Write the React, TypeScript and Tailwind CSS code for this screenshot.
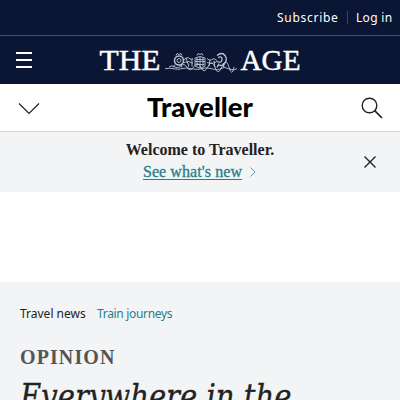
import React from "react";

const serif = "font-['Liberation_Serif',serif]";
const headline = "font-['DejaVu_Serif_Condensed','DejaVu_Serif',serif]";
const sans = "font-['Noto_Sans',sans-serif]";

function Crest() {
  return (
    <g fill="none" stroke="#dfe3ec" strokeWidth="0.9" opacity="0.85">
      <path d="M65 19.2q5-1 9 .1t8-.2 10 .2 10-.2 10 .2 9-.3 8 .3 8-.2M69 17.5q3-2.500 6 0t6-1 6 1.500 7-1 7 1 7-1 7 1 7-1 7 .6 5-.3" />
      <circle cx="79" cy="11" r="4.500" strokeWidth="1.500" />
      <circle cx="79" cy="11" r="2" />
      <path d="M76 6l1-2 2 1 2-1 1 2M75 15l-2 3M81 15l1 3M84 10l4-2 3 2 2-1M84 13l5-1 4 2M86 8l2 7M89 14l-1 4M92 9v8" />
      <path d="M95 8.500q5-3 10 0v8q-5 4-10 0zM95 12h10M100 7v12M97 6l1-2 2 1 2-1 1 2M96 10h8M96 15h8M97 8v9M103 8v9" />
      <path d="M107 9l3 2 4-2 3 2M107 13l5 1 5-2M110 10l-1 7M114 11l1 7" />
      <path d="M117 6q5-4 8 0t-1 9q-3 2-6 0M118 8q4-2 4 2t-5 2M119 14l-2 4M123 14l1 4" strokeWidth="1.300" />
    </g>
  );
}

function Masthead() {
  return (
    <svg width="202" height="40" viewBox="0 -8 202 40" className="block" role="img" aria-label="The Age">
      <g fill="#fff" stroke="#fff" strokeWidth="0.45" fontFamily="'Liberation Serif', serif" fontSize="29">
        <text x="0.5" y="22" textLength="61" lengthAdjust="spacingAndGlyphs">THE</text>
        <text x="141.500" y="22" textLength="60" lengthAdjust="spacingAndGlyphs">AGE</text>
      </g>
      <g transform="translate(1 1.500)"><Crest /></g>
    </svg>
  );
}

export default function App() {
  return (
    <div className={`h-[400px] w-[400px] overflow-hidden bg-white text-[#222] ${sans}`}>
      <div className="flex h-9 items-center justify-end border-b border-[#47506b] bg-[#0a1633] pr-[7px] text-white">
        <a className="flex w-[61px] text-[12px] leading-4 tracking-[0.72px]">Subscribe</a>
        <span className="ml-[9px] h-[13px] w-px bg-[#3b4560]" />
        <a className="ml-2 w-[37px] text-[12px] leading-4 tracking-[0.3px] whitespace-nowrap">Log in</a>
      </div>
      <header className="flex h-12 items-center bg-[#0a1633] pl-4">
        <button className="flex w-4 flex-col gap-[5px]" aria-label="Menu">
          <span className="h-0.5 w-4 bg-white" />
          <span className="h-0.5 w-4 bg-white" />
          <span className="h-0.5 w-4 bg-white" />
        </button>
        <div className="ml-[67px]"><Masthead /></div>
      </header>
      <nav className="flex h-12 items-center justify-between border-b border-[#d6d9df] pr-[17px] pl-[18px]">
        <svg width="22" height="14" fill="none" stroke="#222" strokeWidth="1.2"><path d="M1 2.500L11 12.500L21 2.500" /></svg>
        <svg width="108" height="44" viewBox="0 0 108 44" role="img" aria-label="Traveller">
          <text x="0" y="31" fontFamily="Lato, sans-serif" fontSize="27" fontWeight="900" textLength="106" lengthAdjust="spacingAndGlyphs">Traveller</text>
        </svg>
        <svg width="22" height="22" fill="none" stroke="#222" strokeWidth="1.4"><circle cx="8.500" cy="8.500" r="7.300" /><path d="M13.700 13.700L21 21" strokeWidth="1.700" /></svg>
      </nav>
      <section className={`relative flex h-[60px] flex-col items-center bg-[#f3f4f6] pt-[7px] ${serif}`}>
        <p className="text-[16px] leading-[22px] font-bold">Welcome to Traveller.</p>
        <a className="flex items-center gap-2 pr-[1px] text-[16px] leading-[22px] tracking-[0.08px] text-[#23808a]">
          <span className="underline underline-offset-2 [-webkit-text-stroke:0.3px_#23808a]">See what's new</span>
          <svg width="6" height="10" fill="none" stroke="#5b9ba3" strokeWidth="1"><path d="M.5 .5L5 5L.5 9.500" /></svg>
        </a>
        <button className="absolute top-6 right-6" aria-label="Close">
          <svg width="12" height="12" stroke="#222" strokeWidth="1.400"><path d="M.5 .5L11.500 11.500M11.500 .5L.5 11.500" /></svg>
        </button>
      </section>
      <div className="h-[90px]" />
      <main className="h-[118px] bg-[#f3f4f6] px-5 pt-[23px]">
        <div className="flex h-[18px] gap-3 text-[12px] leading-[18px] whitespace-nowrap">
          <a className="w-[65px]">Travel news</a>
          <a className="tracking-[-0.32px] text-[#23808a]">Train journeys</a>
        </div>
        <p className={`mt-[22px] h-6 text-[20px] leading-6 font-bold tracking-[1.1px] text-[#555] ${serif}`}>OPINION</p>
        <h1 className={`mt-2 origin-left scale-x-[0.98] text-[33px] leading-10 whitespace-nowrap italic [-webkit-text-stroke:0.3px_#222] ${headline}`}>Everywhere in the</h1>
      </main>
    </div>
  );
}
